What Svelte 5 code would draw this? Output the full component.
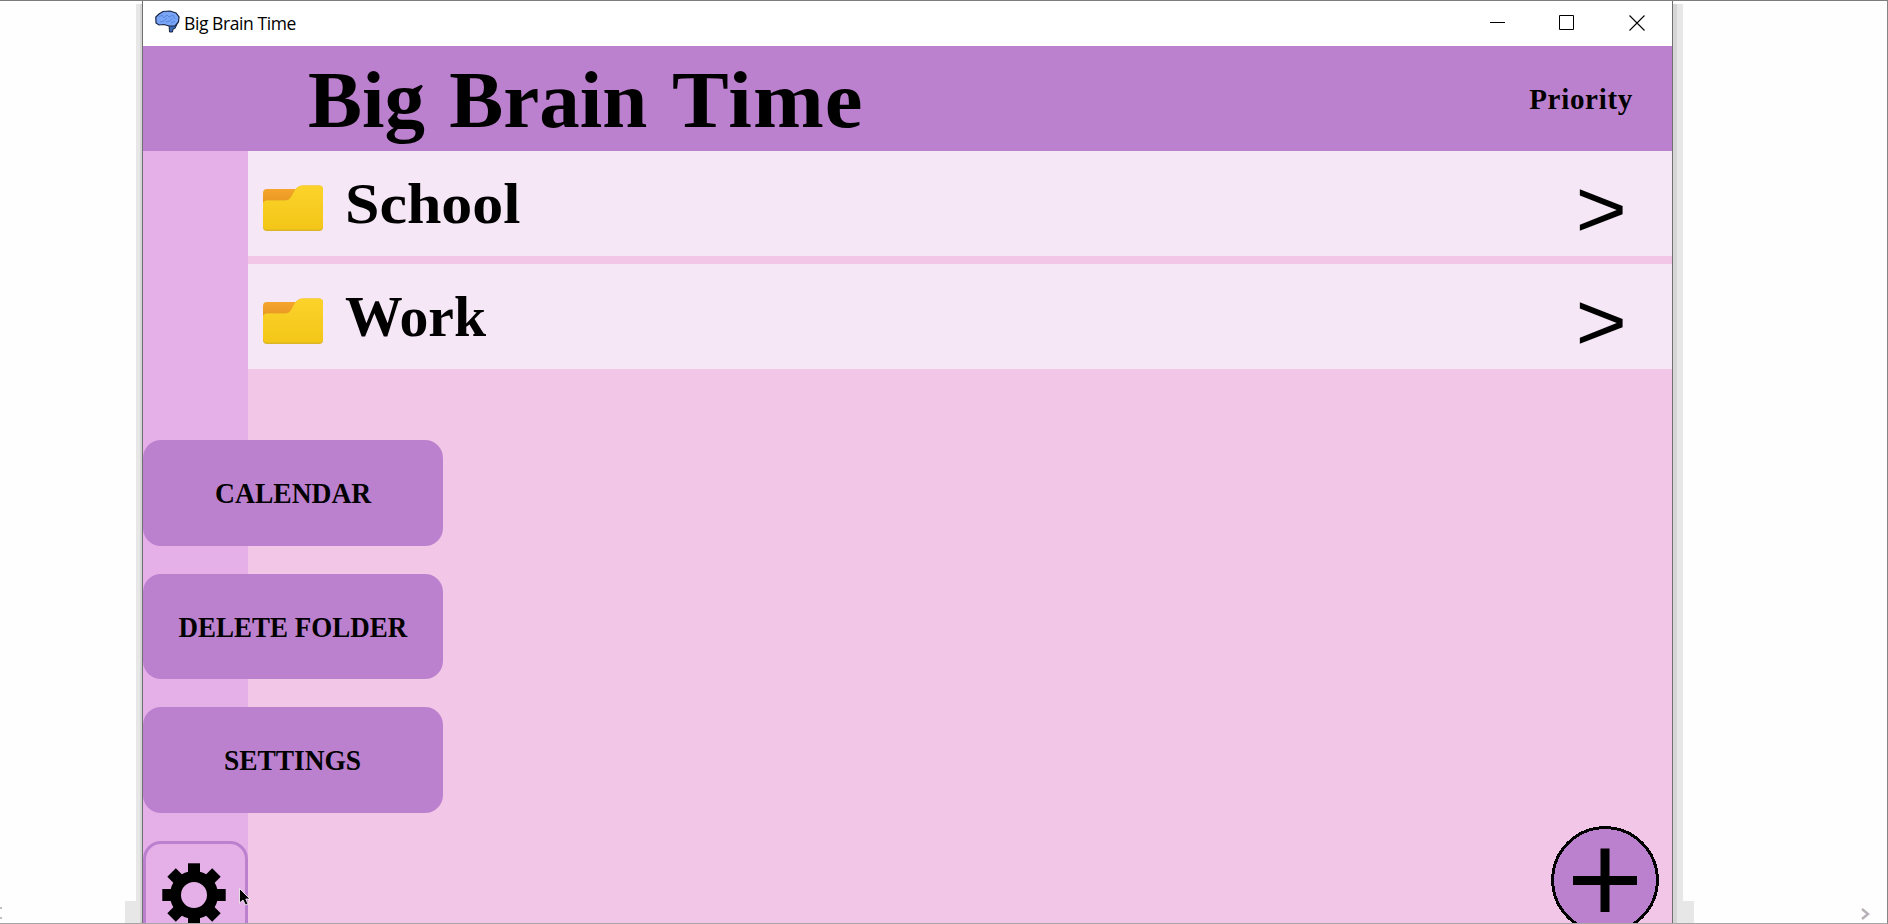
<script>
  const folders = [
    { name: 'School', stretch: 1.105 },
    { name: 'Work', stretch: 1.03 }
  ];
  const actions = [
    { label: 'CALENDAR', stretch: 0.95 },
    { label: 'DELETE FOLDER', stretch: 0.93 },
    { label: 'SETTINGS', stretch: 0.945 }
  ];
  const teeth = [0, 45, 90, 135, 180, 225, 270, 315];
</script>

<div class="desktop">
  <div class="gutter left">
    <span class="page-arrow"><svg width="3" height="12" viewBox="0 0 3 12"><path d="M2 1H0M2 11H0" stroke="#aaa" stroke-width="1.5" /></svg></span>
    <div class="tab"></div>
    <div class="shade outer"></div>
    <div class="shade inner"></div>
  </div>

  <div class="window">
    <div class="titlebar">
      <svg class="brain" width="25" height="24" viewBox="0 0 25 24">
        <path d="M14 14L22.500 13L20 18.500L18 19L17.500 22L14.500 22Z" fill="#3969b5" stroke="#172344" stroke-width="1" />
        <path d="M1 13L0.800 7L4 4L8 1.500L15 1L21 3L24 7L23.500 12L20 16L14 16L9 14.500L4 15Z" fill="#79a5f7" stroke="#172344" stroke-width="1.2" />
        <path d="M4 7L7 5L9 8L12 5L14 7L18 5L20 9M5 12L9 11L12 8M11 12L15 11L17 8M16 13L20 11" fill="none" stroke="#5a87dc" stroke-width="1" />
      </svg>
      <span class="caption">Big Brain Time</span>
      <svg class="controls" width="84" height="17" viewBox="0 0 84 17">
        <path d="M0 8.500H15M69.500 1.500H83.500V15.500H69.500Z" fill="none" stroke="#000" />
      </svg>
      <svg class="close" width="16" height="16" viewBox="0 0 16 16"><path d="M.5 .5L15.5 15.5M15.5 .5L.5 15.5" stroke="#000" stroke-width="1.1" /></svg>
    </div>

    <header>
      <h1>Big Brain <span>Time</span></h1>
      <span class="sort">Priority</span>
    </header>

    <div class="body">
      <aside></aside>
      <main>
        {#each folders as folder}
          <div class="row">
            <svg class="folder" width="60" height="47" viewBox="0 0 60 47">
              <defs>
                <linearGradient id="front" x1="0" y1="0" x2="0" y2="1"><stop offset="0" stop-color="#fcd32b" /><stop offset="1" stop-color="#f3c618" /></linearGradient>
                <linearGradient id="back" x1="0" y1="0" x2="0" y2="1"><stop offset="0" stop-color="#f5a52c" /><stop offset="1" stop-color="#e3921c" /></linearGradient>
              </defs>
              <path d="M4 4H36V24H0V8Q0 4 4 4Z" fill="url(#back)" />
              <path d="M0 19Q0 15.500 4 15.500H22Q26 15.500 28 12L32 5Q35 .5 40 .5H56Q60 .5 60 4.500V42Q60 46 56 46H4Q0 46 0 42Z" fill="#dcb526" />
              <path d="M0 19Q0 15.500 4 15.500H22Q26 15.500 28 12L32 5Q35 .5 40 .5H56Q60 .5 60 4.500V40.500Q60 44.500 56 44.500H4Q0 44.500 0 40.500Z" fill="url(#front)" />
            </svg>
            <span class="name" style="transform: scaleX({folder.stretch})">{folder.name}</span>
            <span class="open">&gt;</span>
          </div>
        {/each}
      </main>

      <nav>
        {#each actions as action}
          <button><span style="transform: scaleX({action.stretch})">{action.label}</span></button>
        {/each}
        <div class="gearbox">
          <svg width="64" height="64" viewBox="-32 -32 64 64">
            <circle r="18.500" fill="none" stroke="#000" stroke-width="11" />
            {#each teeth as angle}
              <rect x="-6" y="-31.700" width="12" height="12" transform="rotate({angle})" />
            {/each}
          </svg>
        </div>
      </nav>

      <svg class="add" width="108" height="108" viewBox="-54 -54 108 108">
        <circle r="52.300" fill="#bc81ce" stroke="#000" stroke-width="3" shape-rendering="crispEdges" />
        <path d="M-32 0.500H32M0 -31.500V32" stroke="#000" stroke-width="9" />
      </svg>

      <svg class="cursor" width="12" height="19" viewBox="0 0 12 19">
        <path d="M.5 .5V15L4 12L6.500 17L9 16L6.800 11H11Z" fill="#000" stroke="#fff" stroke-width=".8" />
      </svg>
    </div>
  </div>

  <div class="gutter right">
    <div class="shade inner"></div>
    <div class="shade outer"></div>
    <div class="tab"></div>
    <span class="page-arrow"><svg width="10" height="12" viewBox="0 0 10 12"><path d="M1 1L7 6L1 11" fill="none" stroke="#b9b1b9" stroke-width="2.500" /></svg></span>
  </div>
</div>

<style>
  :global(body) { margin: 0; overflow: hidden; }
  * { box-sizing: border-box; }
  .desktop {
    display: flex;
    width: 1888px;
    height: 924px;
    background: #fefefe;
    border-top: 1px solid #7d7d7d;
    border-right: 1px solid #858585;
    border-bottom: 1px solid #a6a6a6;
    overflow: hidden;
  }
  .gutter { display: flex; align-items: stretch; }
  .left { width: 142px; }
  .right { flex: 1; }
  .shade { margin-top: 3px; }
  .outer { background: #e7e7e7; }
  .inner { background: #d5d5d5; }
  .left .outer { width: 4px; }
  .left .inner { width: 2px; }
  .right .inner { width: 4px; }
  .right .outer { width: 6px; }
  .tab { align-self: flex-end; height: 22px; background: #e7e7e7; }
  .left .tab { width: 11px; }
  .right .tab { width: 11px; }
  .page-arrow { align-self: flex-end; display: flex; }
  .left .page-arrow { width: 125px; padding-bottom: 4px; }
  .right .page-arrow { margin: 0 16px 3px auto; }

  .window {
    display: flex;
    flex-direction: column;
    width: 1531px;
    border-left: 1px solid #707070;
    border-right: 1px solid #707070;
    background: #f2c6e6;
  }
  .titlebar { display: flex; height: 45px; background: #fff; flex: none; }
  .brain { margin: 9px 0 0 12px; }
  .caption {
    margin: 8px 0 0 4px;
    font: 17.500px/28px "Open Sans", sans-serif;
    letter-spacing: -0.420px;
    color: #000;
    white-space: nowrap;
  }
  .controls { margin: 13px 0 0 auto; }
  .close { margin: 14px 27px 0 55px; }

  header {
    display: flex;
    justify-content: space-between;
    flex: none;
    height: 105px;
    padding: 0 39px 0 165px;
    background: #bc81ce;
    font-family: "Liberation Serif", serif;
    color: #000;
  }
  h1 { margin: 8px 0 0; font-size: 81px; line-height: 92px; font-weight: 700; word-spacing: 4px; }
  h1 span { display: inline-block; transform: scaleX(1.05); transform-origin: left; letter-spacing: 1px; }
  .sort { margin-top: 35px; font-size: 29px; line-height: 36px; font-weight: 700; letter-spacing: 0.700px; }

  .body { position: relative; display: flex; flex: 1; min-height: 0; }
  aside { width: 105px; background: #e5afe8; }
  main { flex: 1; display: flex; flex-direction: column; gap: 7.500px; }
  .row {
    display: flex;
    height: 105px;
    background: #f5e7f5;
    font-family: "Liberation Serif", serif;
    color: #000;
  }
  .folder { margin: 34px 0 0 15px; }
  .name { margin: 21px 0 0 22px; font-size: 56px; line-height: 64px; font-weight: 700; transform-origin: left; }
  .open { margin: 9px 45px 0 auto; font: 88px/100px "Liberation Sans", sans-serif; transform: scaleY(0.92); }

  nav { position: absolute; left: 0; top: 289px; display: flex; flex-direction: column; gap: 28px; }
  button {
    width: 300px;
    height: 105.500px;
    padding: 0;
    border: 0;
    border-radius: 18px;
    background: #bc81ce;
    color: #000;
    font: 700 29px/36px "Liberation Serif", serif;
  }
  button span { display: inline-block; margin-top: 1px; white-space: nowrap; }
  .gearbox {
    width: 105px;
    height: 105px;
    border: 3px solid #bc81ce;
    border-radius: 18px;
    padding: 19px 0 0 16px;
  }
  .add { position: absolute; left: 1407.500px; top: 675px; }
  .cursor { position: absolute; left: 96px; top: 737px; }
</style>
